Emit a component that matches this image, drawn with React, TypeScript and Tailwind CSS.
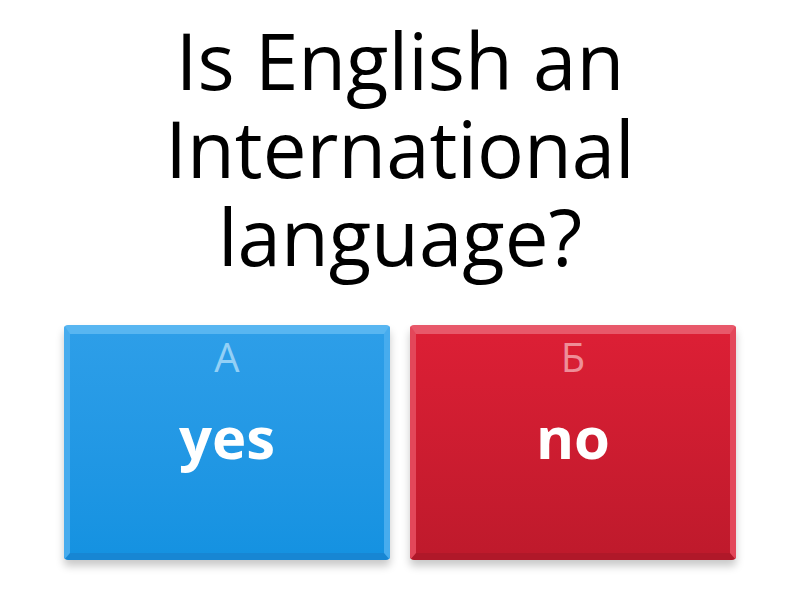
import React from "react";

function Answer({ letter, text, color }: { letter: string; text: string; color: "blue" | "red" }) {
  const outer =
    color === "blue"
      ? "border-t-[#58b6f1] border-x-[#47acee] border-b-[#1786d3]"
      : "border-t-[#e8586a] border-x-[#e3475a] border-b-[#b01829]";
  const inner =
    color === "blue"
      ? "bg-gradient-to-b from-[#2d9ee8] to-[#1592e1]"
      : "bg-gradient-to-b from-[#dc1f35] to-[#bf1a2c]";
  const letterColor = color === "blue" ? "text-[#93d0f6]" : "text-[#ee8e98]";
  return (
    <div
      className={`w-[326px] h-[235px] rounded-[4px] border-t-[9px] border-x-[6px] border-b-[7px] ${outer} shadow-[0_6px_8px_rgba(0,0,0,0.22)] overflow-hidden`}
    >
      <div className={`w-full h-full ${inner} flex flex-col items-center`}>
        <div className={`pt-[3px] text-[40px] leading-none ${letterColor}`}>{letter}</div>
        <div className="mt-[31px] text-[58px] leading-none font-bold text-white">{text}</div>
      </div>
    </div>
  );
}

export default function App() {
  return (
    <div
      className="w-[800px] h-[600px] bg-white flex flex-col items-center"
      style={{ fontFamily: '"Open Sans", "Noto Sans", sans-serif' }}
    >
      <div className="pt-[16px] text-[78px] leading-[88px] text-black text-center w-[560px]">
        Is English an International language?
      </div>
      <div className="mt-[45px] flex gap-[20px]">
        <Answer letter="А" text="yes" color="blue" />
        <Answer letter="Б" text="no" color="red" />
      </div>
    </div>
  );
}
